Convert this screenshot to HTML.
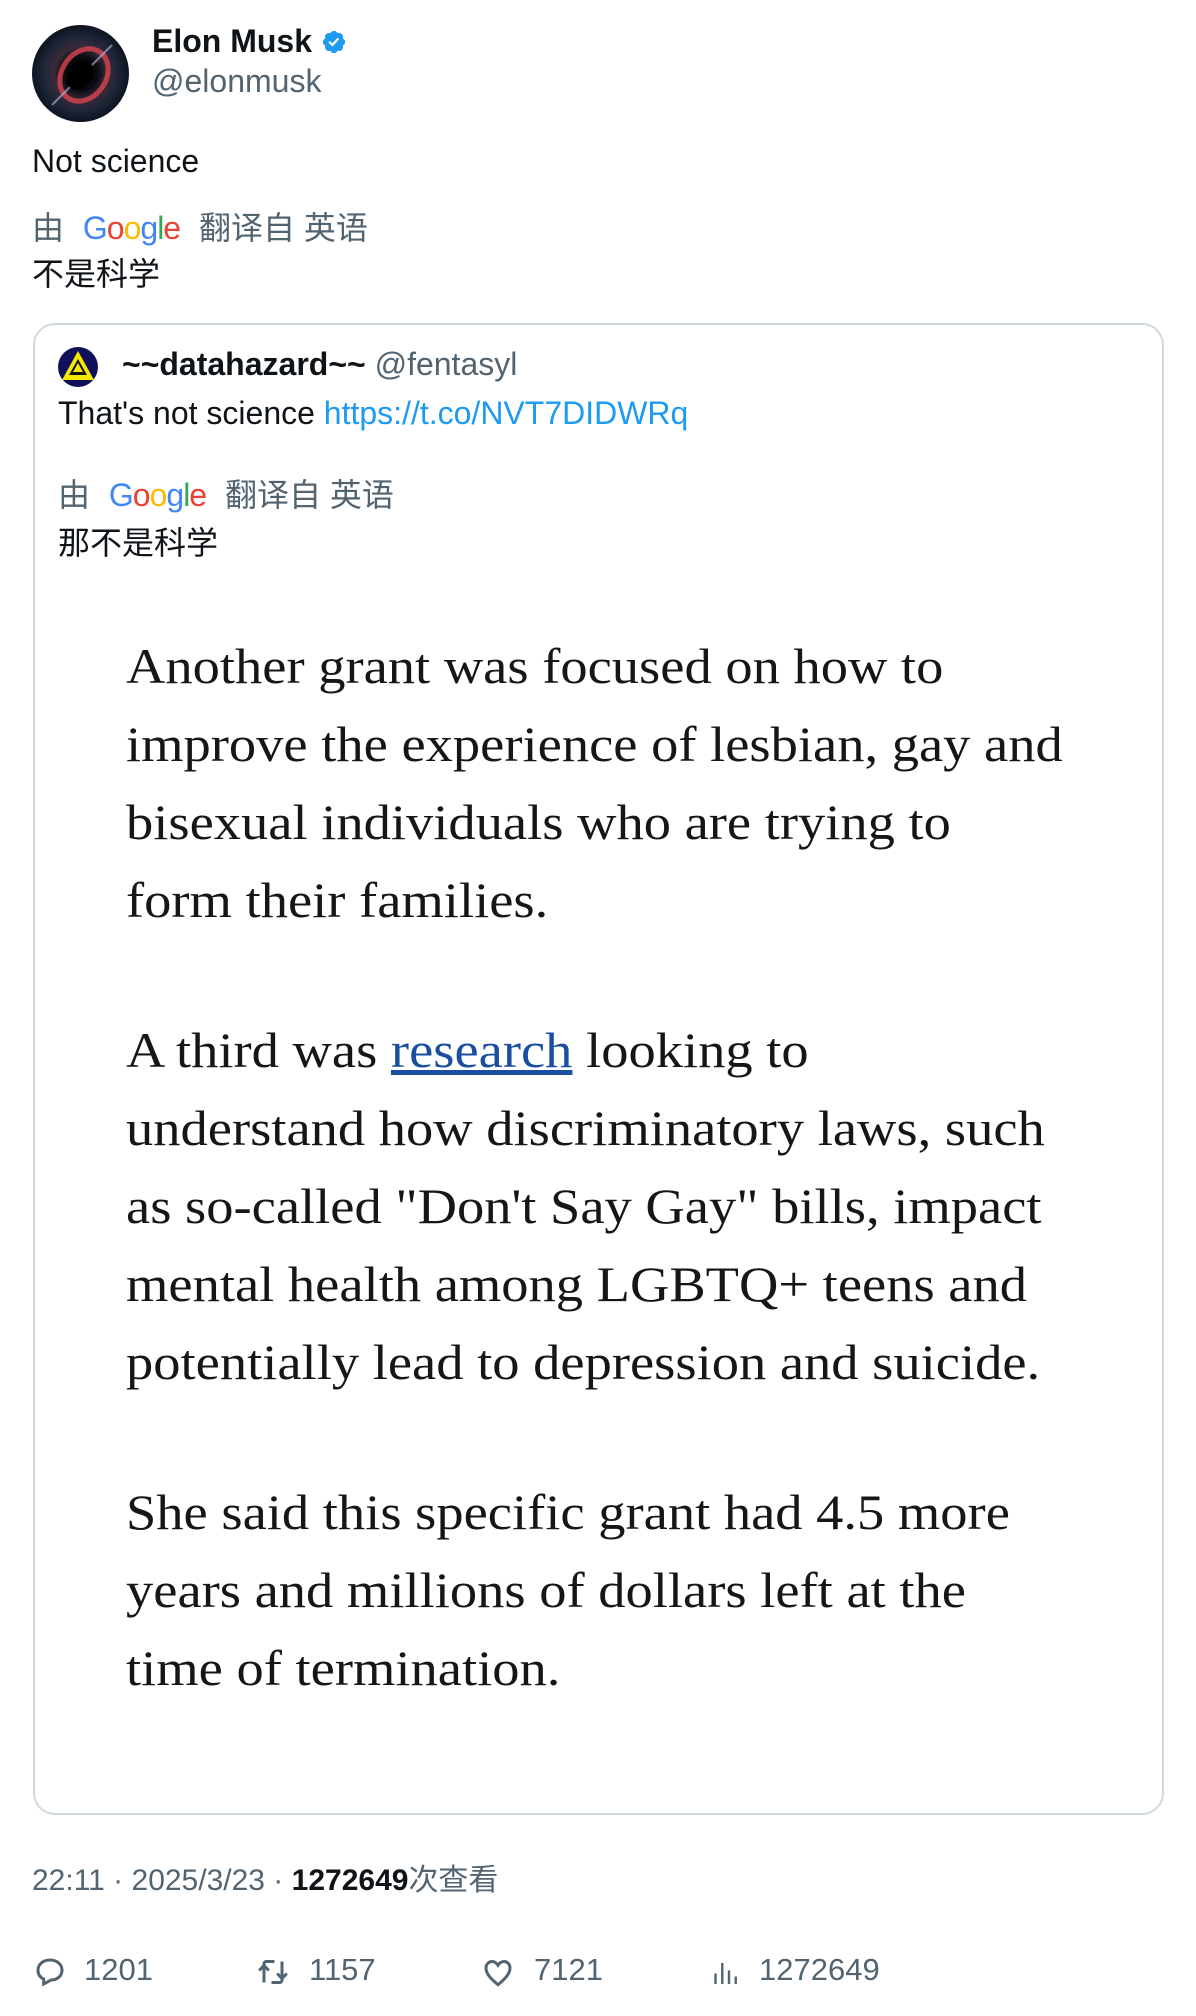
<!DOCTYPE html>
<html><head><meta charset="utf-8"><style>
*{margin:0;padding:0;box-sizing:border-box}
body{width:1196px;height:2016px;background:#fff;position:relative;overflow:hidden;font-family:"Liberation Sans","Noto Sans CJK SC",sans-serif;color:#0f1419}
.a{position:absolute;white-space:nowrap}
.t{font-size:32px;line-height:40px}
.g{color:#536471}
.card{position:absolute;left:33px;top:323px;width:1131px;height:1492px;border:2px solid #cfd9de;border-radius:22px}
.art{position:absolute;left:126px;font-family:"Liberation Serif",serif;font-size:50px;line-height:78px;color:#161616;white-space:nowrap;transform:scaleX(1.09);transform-origin:0 0}
.art a{color:#1a4fa0;text-decoration:underline}
.st{font-size:31px;line-height:34px}
</style></head><body>
<svg class="a" style="left:32px;top:25px" width="97" height="97" viewBox="0 0 97 97">
<defs><radialGradient id="r" cx="50%" cy="50%" r="50%"><stop offset="0" stop-color="#000"/><stop offset=".35" stop-color="#0a0a12"/><stop offset=".55" stop-color="#3a2a3a"/><stop offset=".8" stop-color="#1b2436"/><stop offset="1" stop-color="#0e1420"/></radialGradient></defs>
<circle cx="48.5" cy="48.5" r="48.5" fill="url(#r)"/>
<ellipse cx="52" cy="50" rx="22" ry="28" transform="rotate(35 52 50)" fill="none" stroke="#d9454f" stroke-width="5" opacity=".8"/>
<path d="M20 80 L80 20" stroke="#b6c0e0" stroke-width="2" opacity=".6"/>
<ellipse cx="48" cy="50" rx="12" ry="16" transform="rotate(35 48 50)" fill="#000"/>
</svg>
<div class="a t" style="left:152px;top:21px;font-weight:bold">Elon Musk</div>
<svg class="a" style="left:321px;top:29px" width="26" height="26" viewBox="0 0 24 24"><path fill="#1d9bf0" d="M22.25 12c0-1.430-.88-2.670-2.190-3.340.46-1.390.2-2.900-.81-3.910s-2.520-1.270-3.910-.81c-.66-1.310-1.910-2.190-3.340-2.190s-2.670.88-3.330 2.190c-1.400-.46-2.910-.2-3.920.81s-1.260 2.520-.8 3.910c-1.310.67-2.200 1.910-2.200 3.340s.89 2.670 2.200 3.340c-.46 1.390-.21 2.900.8 3.910s2.520 1.260 3.910.81c.67 1.310 1.910 2.190 3.340 2.190s2.680-.88 3.340-2.190c1.390.45 2.900.2 3.910-.81s1.270-2.520.81-3.910c1.310-.67 2.190-1.910 2.190-3.340z"/><path fill="#fff" d="M10.54 16.2l-3.74-3.74 1.41-1.41 2.26 2.26 4.8-5.23 1.47 1.360z"/></svg>
<div class="a t g" style="left:152px;top:61px">@elonmusk</div>
<div class="a t" style="left:32px;top:141px">Not science</div>
<div class="a t g" style="left:32px;top:208px">由 <b style="font-weight:normal;margin:0 10px 0 10px;letter-spacing:-1px"><span style="color:#4285f4">G</span><span style="color:#ea4335">o</span><span style="color:#fbbc05">o</span><span style="color:#4285f4">g</span><span style="color:#34a853">l</span><span style="color:#ea4335">e</span></b> 翻译自 英语</div>
<div class="a t" style="left:32px;top:254px">不是科学</div>

<div class="card"></div>
<svg class="a" style="left:58px;top:347px" width="40" height="40" viewBox="0 0 40 40"><circle cx="20" cy="20" r="20" fill="#10105a"/><path d="M20 4 L36 33 L4 33Z" fill="#f5e900"/><path d="M20 12 L29 28 L11 28Z" fill="#111"/><path d="M20 16 L25 25 L15 25Z" fill="#f5e900"/></svg>
<div class="a t" style="left:122px;top:344px"><b>~~datahazard~~</b> <span class="g">@fentasyl</span></div>
<div class="a t" style="left:58px;top:393px">That's not science <span style="color:#1d9bf0">https://t.co/NVT7DIDWRq</span></div>
<div class="a t g" style="left:58px;top:475px">由 <b style="font-weight:normal;margin:0 10px 0 10px;letter-spacing:-1px"><span style="color:#4285f4">G</span><span style="color:#ea4335">o</span><span style="color:#fbbc05">o</span><span style="color:#4285f4">g</span><span style="color:#34a853">l</span><span style="color:#ea4335">e</span></b> 翻译自 英语</div>
<div class="a t" style="left:58px;top:523px">那不是科学</div>

<div class="art" style="top:627px">Another grant was focused on how to<br>improve the experience of lesbian, gay and<br>bisexual individuals who are trying to<br>form their families.</div>
<div class="art" style="top:1011px">A third was <a>research</a> looking to<br>understand how discriminatory laws, such<br>as so-called "Don't Say Gay" bills, impact<br>mental health among LGBTQ+ teens and<br>potentially lead to depression and suicide.</div>
<div class="art" style="top:1473px">She said this specific grant had 4.5 more<br>years and millions of dollars left at the<br>time of termination.</div>

<div class="a g" style="left:32px;top:1864px;font-size:30px;line-height:34px">22:11 · 2025/3/23 · <b style="color:#0f1419">1272649</b>次查看</div>

<svg class="a" style="left:32px;top:1954px" width="36" height="36" viewBox="0 0 24 24"><path fill="none" stroke="#536471" stroke-width="2" d="M12 4c4.8 0 8 3 8 6.8 0 4-3.4 6.5-7.2 6.5L7.8 20v-3.3C5.5 15.6 4 13.5 4 10.8 4 7 7.2 4 12 4z"/></svg>
<div class="a g st" style="left:84px;top:1953px">1201</div>
<svg class="a" style="left:255px;top:1954px" width="36" height="36" viewBox="0 0 24 24"><path fill="none" stroke="#536471" stroke-width="2" d="M6 19V8M2.8 11L6 7.6 9.2 11M6 7.6V6.5C6 5.7 6.7 5 7.5 5H13M18 5v11M14.8 13L18 16.4 21.2 13M18 16.4v1.1c0 .8-.7 1.5-1.5 1.5H11"/></svg>
<div class="a g st" style="left:309px;top:1953px">1157</div>
<svg class="a" style="left:480px;top:1954px" width="36" height="36" viewBox="0 0 24 24"><path fill="none" stroke="#536471" stroke-width="2" d="M12 20.5C6 15.5 4 12.5 4 9.3 4 6.9 5.8 5 8 5c1.7 0 3 1 4 2.5C13 6 14.3 5 16 5c2.2 0 4 1.9 4 4.3 0 3.2-2 6.2-8 11.2z"/></svg>
<div class="a g st" style="left:534px;top:1953px">7121</div>
<svg class="a" style="left:708px;top:1954px" width="36" height="36" viewBox="0 0 24 24"><path stroke="#536471" stroke-width="1.6" d="M5 20V13M9.5 20V6M14 20V11M18.5 20V15"/></svg>
<div class="a g st" style="left:759px;top:1953px">1272649</div>
</body></html>
